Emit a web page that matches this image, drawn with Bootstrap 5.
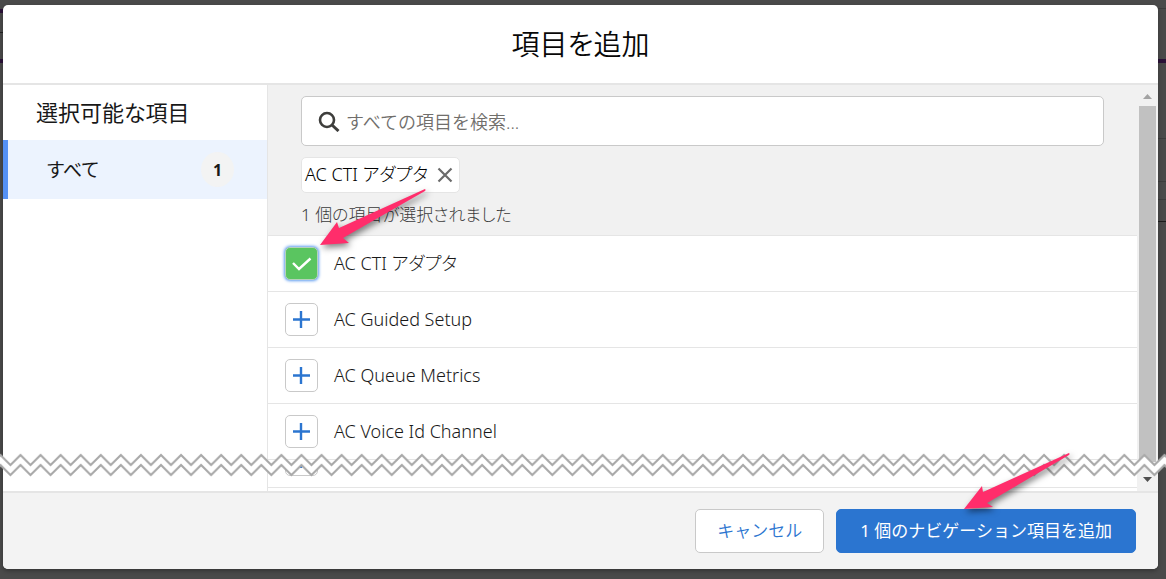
<!DOCTYPE html>
<html lang="ja">
<head>
<meta charset="utf-8">
<meta name="viewport" content="width=device-width, initial-scale=1">
<title>項目を追加</title>
<link href="https://cdn.jsdelivr.net/npm/bootstrap@5.3.0/dist/css/bootstrap.min.css" rel="stylesheet">
<style>
  body {
    font-family: "Noto Sans", "Noto Sans CJK JP", sans-serif;
    font-feature-settings: "palt";
    font-size: 18px;
    font-weight: 300;
    line-height: 24px;
    color: #181818;
    background: #4a4a4a;
  }
  .backdrop-page {
    height: 100vh;
    min-height: 480px;
    padding: 5px 8px 10px 3px;
    background:
      linear-gradient(#2b1238, #2b1238) 0 9px / 3px 4px no-repeat,
      linear-gradient(#222, #222) 0 32px / 3px 1px no-repeat,
      linear-gradient(#2b1238, #2b1238) 0 59px / 100% 4px no-repeat,
      linear-gradient(#3c3c3c, #3c3c3c) 100% 8px / 8px 1px no-repeat,
      linear-gradient(#3c3c3c, #3c3c3c) 100% 138px / 8px 1px no-repeat,
      linear-gradient(#3c3c3c, #3c3c3c) 100% 181px / 8px 1px no-repeat,
      linear-gradient(#3c3c3c, #3c3c3c) 100% 199px / 8px 1px no-repeat,
      linear-gradient(#1c1c1c, #1c1c1c) 100% 221px / 8px 1px no-repeat,
      #4a4a4a;
  }
  .dialog-box { border-radius: 5px; box-shadow: 0 2px 4px rgba(0, 0, 0, .3); }
  .dialog-head { height: 80px; border-bottom: 2px solid #e5e5e5; }
  .dialog-head h1 { font-size: 28px; line-height: 36px; font-weight: 350; color: #080707; }
  .dialog-body { min-height: 0; }
  .side-panel { width: 265px; border-right: 1px solid #e5e5e5; }
  .side-panel h2 { font-size: 22px; line-height: 32px; font-weight: 400; padding: 11px 33px 12px; }
  .side-item {
    height: 59px; padding: 0 33px 0 39px; font-size: 19px;
    border-left: 5px solid #5591f5; background: #ecf3fe; color: #181818; font-weight: 400;
  }
  .side-item:hover { color: #181818; }
  .count-pill { width: 33px; height: 35px; border-radius: 50%; background: #f3f3f3; font-size: 16px; font-weight: 700; }
  .filter-panel { background: #f1f1f1; padding: 11px 33px 8px; border-bottom: 1px solid #e5e5e5; }
  .search-box { height: 50px; border: 1px solid #c9c9c9; border-radius: 5px; padding: 0 16px; gap: 6px; }
  .search-box input { font-size: 18px; font-weight: 350; outline: 0; min-width: 0; line-height: 24px; padding: 2px 0 0; }
  .search-box input::placeholder { color: #706e6b; opacity: 1; }
  .chosen-pill { height: 36px; border: 1px solid #e5e5e5; border-radius: 5px; padding: 0 6px 0 3px; margin-top: 11px; gap: 9px; }
  .chosen-count { font-size: 17px; color: #3a3a3a; margin-top: 10px; }
  .pick-row { height: 56px; padding: 0 17px; gap: 16px; border-bottom: 1px solid #e5e5e5; }
  .pick-row span, .chosen-pill span { padding-bottom: 2px; }
  .cut-row { height: 28px; padding-bottom: 11px; overflow: hidden; }
  .pick-btn { width: 33px; height: 33px; border: 1px solid #c9c9c9; border-radius: 5px; background: #fff; }
  .pick-btn.chosen { background: #5ac560; border-color: #b6d2bb; box-shadow: 0 0 3px 1px #5f9cf0; }
  .scroll-rail { width: 21px; background: #f1f1f1; padding: 9px 2px 9px 2px; }
  .scroll-thumb { background: #c1c1c1; margin: 7px 0 15px; width: 17px; }
  .dialog-foot { height: 78px; border-top: 2px solid #e5e5e5; background: #f3f3f3; border-radius: 0 0 5px 5px; padding: 0 22px; gap: 12px; }
  .dialog-foot .btn { height: 44px; font-size: 17px; font-weight: 350; border-radius: 5px; padding: 0 21px; }
  .btn-cancel, .btn-cancel:hover { color: #2b75d0; background: #fff; border-color: #c9c9c9; }
  .btn-add, .btn-add:hover { color: #fff; background: #2b75d0; border-color: #2b75d0; }
  .dialog-foot .btn-add { font-weight: 400; padding: 0 23px; }
  .torn-edge { left: -3px; width: calc(100% + 11px); bottom: 14px; height: 24px; }
  .pointer-shape { filter: drop-shadow(2px 3px 3px rgba(0, 0, 0, .5)); pointer-events: none; overflow: visible; z-index: 5; }
  .pointer-item { left: 52px; bottom: -11px; }
  .pointer-add { left: 128px; top: -56px; }
</style>
</head>
<body>
<div class="backdrop-page overflow-hidden">
  <div class="dialog-box bg-white d-flex flex-column h-100" role="dialog" aria-labelledby="dialogTitle">
    <header class="dialog-head d-flex align-items-center justify-content-center flex-shrink-0">
      <h1 id="dialogTitle" class="m-0">項目を追加</h1>
    </header>

    <div class="dialog-body d-flex flex-grow-1 position-relative">
      <nav class="side-panel flex-shrink-0">
        <h2 class="m-0">選択可能な項目</h2>
        <a href="#" class="side-item d-flex align-items-center justify-content-between text-decoration-none">
          <span>すべて</span>
          <span class="count-pill d-flex align-items-center justify-content-center">1</span>
        </a>
      </nav>

      <main class="flex-grow-1 overflow-hidden">
        <section class="filter-panel position-relative">
          <div class="search-box bg-white d-flex align-items-center">
            <svg width="22" height="22" viewBox="0 0 22 22" fill="none" stroke="#3e3e3c" class="flex-shrink-0" aria-hidden="true">
              <circle cx="9" cy="10" r="7" stroke-width="2.6"/>
              <path d="M14 15l6.500 6" stroke-width="3"/>
            </svg>
            <input type="text" class="border-0 flex-grow-1" aria-label="すべての項目を検索" placeholder="すべての項目を検索...">
          </div>
          <div class="chosen-pill bg-white d-inline-flex align-items-center">
            <span class="text-black">AC CTI アダプタ</span>
            <button type="button" class="btn p-0 border-0 d-flex" aria-label="削除">
              <svg width="16" height="16" viewBox="0 0 16 16" stroke="#6b6b6b" stroke-width="2.200" aria-hidden="true"><path d="M1.500 1.500l13 13M14.500 1.500l-13 13"/></svg>
            </button>
          </div>
          <p class="chosen-count mb-0">1 個の項目が選択されました</p>
          <svg class="pointer-shape pointer-item position-absolute" width="106" height="57" viewBox="0 0 106 57" fill="#ff2d6b" aria-hidden="true">
            <path d="M105 0Q106 1 105 2L23 49 29 54 0 56 17 33 19 39Z"/>
          </svg>
        </section>

        <div>
          <div class="pick-row d-flex align-items-center">
            <button type="button" class="pick-btn chosen p-0 d-flex align-items-center justify-content-center" aria-label="AC CTI アダプタを選択解除">
              <svg width="20" height="14" viewBox="0 0 20 14" fill="none" stroke="#fff" stroke-width="2.400" aria-hidden="true"><path d="M1 6l6 6L18.500 1.500"/></svg>
            </button>
            <span>AC CTI アダプタ</span>
          </div>
          <div class="pick-row d-flex align-items-center">
            <button type="button" class="pick-btn p-0 d-flex align-items-center justify-content-center" aria-label="AC Guided Setup を選択">
              <svg width="17" height="17" viewBox="0 0 17 17" stroke="#2b75d0" stroke-width="2.400" aria-hidden="true"><path d="M8 0v17M0 8.500h17"/></svg>
            </button>
            <span>AC Guided Setup</span>
          </div>
          <div class="pick-row d-flex align-items-center">
            <button type="button" class="pick-btn p-0 d-flex align-items-center justify-content-center" aria-label="AC Queue Metrics を選択">
              <svg width="17" height="17" viewBox="0 0 17 17" stroke="#2b75d0" stroke-width="2.400" aria-hidden="true"><path d="M8 0v17M0 8.500h17"/></svg>
            </button>
            <span>AC Queue Metrics</span>
          </div>
          <div class="pick-row d-flex align-items-center">
            <button type="button" class="pick-btn p-0 d-flex align-items-center justify-content-center" aria-label="AC Voice Id Channel を選択">
              <svg width="17" height="17" viewBox="0 0 17 17" stroke="#2b75d0" stroke-width="2.400" aria-hidden="true"><path d="M8 0v17M0 8.500h17"/></svg>
            </button>
            <span>AC Voice Id Channel</span>
          </div>
          <div class="pick-row cut-row d-flex align-items-end">
            <button type="button" class="pick-btn p-0 d-flex align-items-center justify-content-center" aria-label="選択">
              <svg width="17" height="17" viewBox="0 0 17 17" stroke="#2b75d0" stroke-width="2.400" aria-hidden="true"><path d="M8 0v17"/></svg>
            </button>
          </div>
        </div>
      </main>

      <div class="scroll-rail flex-shrink-0 d-flex flex-column" aria-hidden="true">
        <svg width="17" height="5" viewBox="0 0 17 5" class="flex-shrink-0"><path d="M8.500 0L13 5H4z" fill="#a3a3a3"/></svg>
        <div class="scroll-thumb flex-grow-1"></div>
        <svg width="17" height="5" viewBox="0 0 17 5" class="flex-shrink-0"><path d="M4 0h9L8.500 5z" fill="#505050"/></svg>
      </div>

      <svg class="torn-edge position-absolute" aria-hidden="true">
        <defs>
          <pattern id="zigzag" width="20.070" height="24" patternUnits="userSpaceOnUse" x="0.430">
            <path d="M-10 12L0 2l10 10L20.070 2l10 10v0L20.070 12l-10 10L0 12l-10 10z" fill="#fff"/>
            <path d="M-10 12L0 2l10 10L20.070 2l10 10M-10 22L0 12l10 10L20.070 12l10 10" fill="none" stroke="#a9a9a9" stroke-width="2"/>
          </pattern>
        </defs>
        <rect width="100%" height="24" fill="url(#zigzag)"/>
      </svg>
    </div>

    <footer class="dialog-foot d-flex align-items-center justify-content-end flex-shrink-0">
      <button type="button" class="btn btn-cancel">キャンセル</button>
      <div class="position-relative">
        <button type="button" class="btn btn-add">1 個のナビゲーション項目を追加</button>
        <svg class="pointer-shape pointer-add position-absolute" width="106" height="57" viewBox="0 0 106 57" fill="#ff2d6b" aria-hidden="true">
          <path d="M105 0Q106 1 105 2L23 50 29 54 0 56 18 33 19 39Z"/>
        </svg>
      </div>
    </footer>
  </div>
</div>
<script src="https://cdn.jsdelivr.net/npm/bootstrap@5.3.0/dist/js/bootstrap.bundle.min.js"></script>
</body>
</html>
